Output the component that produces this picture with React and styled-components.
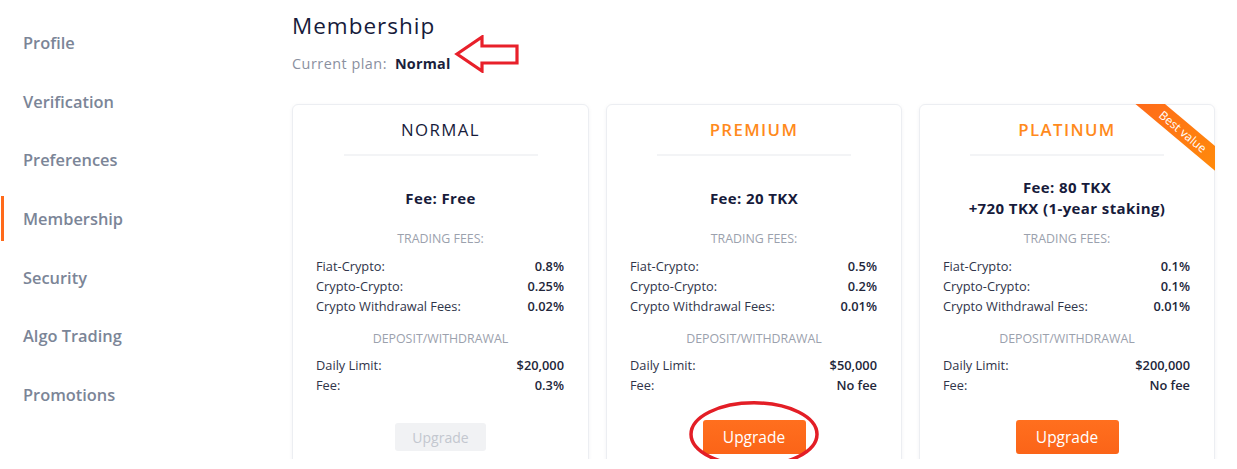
import React from 'react'
import styled, { createGlobalStyle } from 'styled-components'

const GlobalStyle = createGlobalStyle`
    html, body {
        margin: 0;
        padding: 0;
        background: #ffffff;
        font-family: "Open Sans", "Liberation Sans", sans-serif;
    }
    * {
        box-sizing: border-box;
    }
`;

const Page = styled.div`
    display: flex;
    width: 1237px;
    height: 459px;
    overflow: hidden;
    background: #ffffff;
`;

const Sidebar = styled.nav`
    width: 292px;
    flex-shrink: 0;
    padding-top: 13px;
    display: flex;
    flex-direction: column;
`;

const NavItem = styled.div`
    position: relative;
    height: 58.7px;
    display: flex;
    align-items: center;
    padding-left: 23px;
    font-size: 16.4px;
    font-weight: 600;
    color: #7b8597;

    ${props => props.active && `
        &::before {
            content: '';
            position: absolute;
            left: 1px;
            top: 7px;
            bottom: 7px;
            width: 3px;
            background: #ff6a1a;
        }
    `}
`;

const Main = styled.main`
    flex: 1;
    padding-top: 11px;
`;

const Title = styled.h1`
    margin: 0;
    font-size: 22.5px;
    line-height: 30px;
    font-weight: 500;
    letter-spacing: 1px;
    color: #171b3b;
`;

const CurrentPlan = styled.div`
    position: relative;
    display: flex;
    align-items: center;
    gap: 8px;
    margin-top: 12px;
    height: 20px;
    font-size: 14.4px;
    color: #8a90a0;
    letter-spacing: 0.5px;

    b {
        color: #1b1f3c;
        font-weight: 700;
        letter-spacing: 0.2px;
    }
`;

const ArrowMark = styled.svg`
    position: absolute;
    left: 162px;
    top: -18px;
`;

const Cards = styled.div`
    display: grid;
    grid-template-columns: 297px 296px 296px;
    column-gap: 17px;
    margin-top: 31px;
`;

const Card = styled.div`
    position: relative;
    height: 420px;
    border: 1px solid #eceef2;
    border-radius: 6px;
    box-shadow: 0 1px 4px rgba(30, 40, 70, 0.05);
    display: flex;
    flex-direction: column;
    align-items: center;
`;

const PlanName = styled.div`
    margin-top: 15px;
    height: 20px;
    line-height: 20px;
    font-size: 16.8px;
    font-weight: ${props => props.highlight ? 600 : 500};
    letter-spacing: 1.4px;
    color: ${props => props.highlight ? '#ff8a1c' : '#171b3b'};
`;

const Divider = styled.div`
    margin-top: 14px;
    width: 194px;
    height: 2px;
    background: #f3f4f6;
`;

const Fee = styled.div`
    margin-top: 14px;
    height: 56px;
    display: flex;
    flex-direction: column;
    justify-content: center;
    align-items: center;
    font-size: 15px;
    font-weight: 700;
    line-height: 21px;
    letter-spacing: 0.4px;
    color: #171b3b;
`;

const SectionLabel = styled.div`
    margin-top: ${props => props.gap}px;
    height: 16px;
    line-height: 16px;
    font-size: 12.4px;
    color: #9ba1ad;
    text-transform: uppercase;
`;

const Rows = styled.div`
    align-self: stretch;
    margin-top: ${props => props.gap}px;
    padding: 0 24px 0 23px;
`;

const Row = styled.div`
    display: flex;
    justify-content: space-between;
    align-items: center;
    height: 20px;
    font-size: 12.8px;
    color: #30354a;

    span:last-child {
        font-weight: 600;
        color: #22263a;
    }
`;

const ButtonWrap = styled.div`
    position: relative;
    margin-top: 25px;
    height: 34px;
    display: flex;
    align-items: center;
    justify-content: center;
`;

const UpgradeButton = styled.button`
    font-family: inherit;
    border: none;
    border-radius: 3px;
    cursor: ${props => props.disabled ? 'default' : 'pointer'};
    width: ${props => props.disabled ? 91 : 103}px;
    height: ${props => props.disabled ? 28 : 34}px;
    font-size: ${props => props.disabled ? 14 : 15.5}px;
    color: ${props => props.disabled ? '#c3c7cf' : '#ffffff'};
    background: ${props => props.disabled ? '#f1f2f4' : 'linear-gradient(180deg, #ff6f1e, #fb6418)'};
`;

const CircleMark = styled.svg`
    position: absolute;
    left: 50%;
    top: 50%;
    transform: translate(-50%, -54%);
    pointer-events: none;
`;

const Ribbon = styled.div`
    position: absolute;
    top: -1px;
    right: -1px;
    width: 80px;
    height: 70px;
    overflow: hidden;
    border-top-right-radius: 6px;
`;

const RibbonBand = styled.div`
    position: absolute;
    left: -8px;
    top: 18px;
    width: 112px;
    height: 19px;
    line-height: 19px;
    transform: rotate(40deg);
    background: linear-gradient(90deg, #ff6a1a, #ff8c0a);
    color: #ffffff;
    font-size: 12px;
    text-align: center;
`;

const plans = [
    {
        name: 'NORMAL',
        fee: ['Fee: Free'],
        trading: [['Fiat-Crypto:', '0.8%'], ['Crypto-Crypto:', '0.25%'], ['Crypto Withdrawal Fees:', '0.02%']],
        deposit: [['Daily Limit:', '$20,000'], ['Fee:', '0.3%']],
        disabled: true,
    },
    {
        name: 'PREMIUM',
        highlight: true,
        fee: ['Fee: 20 TKX'],
        trading: [['Fiat-Crypto:', '0.5%'], ['Crypto-Crypto:', '0.2%'], ['Crypto Withdrawal Fees:', '0.01%']],
        deposit: [['Daily Limit:', '$50,000'], ['Fee:', 'No fee']],
        circled: true,
    },
    {
        name: 'PLATINUM',
        highlight: true,
        fee: ['Fee: 80 TKX', '+720 TKX (1-year staking)'],
        trading: [['Fiat-Crypto:', '0.1%'], ['Crypto-Crypto:', '0.1%'], ['Crypto Withdrawal Fees:', '0.01%']],
        deposit: [['Daily Limit:', '$200,000'], ['Fee:', 'No fee']],
        badge: 'Best value',
    },
];

const navItems = ['Profile', 'Verification', 'Preferences', 'Membership', 'Security', 'Algo Trading', 'Promotions'];

const App = () => {
    return (
        <>
            <GlobalStyle />
            <Page>
                <Sidebar>
                    {navItems.map(item => (
                        <NavItem key={item} active={item === 'Membership'}>{item}</NavItem>
                    ))}
                </Sidebar>
                <Main>
                    <Title>Membership</Title>
                    <CurrentPlan>
                        Current plan: <b>Normal</b>
                        <ArrowMark width="66" height="38" viewBox="0 0 66 38">
                            <path d="M3 19 L28 2 L28 11 L63 11 L63 28 L28 28 L28 36 Z"
                                fill="none" stroke="#e8202a" strokeWidth="3.2" strokeLinejoin="miter" />
                        </ArrowMark>
                    </CurrentPlan>
                    <Cards>
                        {plans.map(plan => (
                            <Card key={plan.name}>
                                {plan.badge && <Ribbon><RibbonBand>{plan.badge}</RibbonBand></Ribbon>}
                                <PlanName highlight={plan.highlight}>{plan.name}</PlanName>
                                <Divider />
                                <Fee>
                                    {plan.fee.map(line => <div key={line}>{line}</div>)}
                                </Fee>
                                <SectionLabel gap={5}>Trading fees:</SectionLabel>
                                <Rows gap={9}>
                                    {plan.trading.map(([label, value]) => (
                                        <Row key={label}><span>{label}</span><span>{value}</span></Row>
                                    ))}
                                </Rows>
                                <SectionLabel gap={15}>Deposit/Withdrawal</SectionLabel>
                                <Rows gap={8}>
                                    {plan.deposit.map(([label, value]) => (
                                        <Row key={label}><span>{label}</span><span>{value}</span></Row>
                                    ))}
                                </Rows>
                                <ButtonWrap>
                                    <UpgradeButton disabled={plan.disabled}>Upgrade</UpgradeButton>
                                    {plan.circled && (
                                        <CircleMark width="132" height="68" viewBox="0 0 132 68">
                                            <ellipse cx="66" cy="34" rx="63" ry="31.5" fill="none" stroke="#e31e26" strokeWidth="3.5" />
                                        </CircleMark>
                                    )}
                                </ButtonWrap>
                            </Card>
                        ))}
                    </Cards>
                </Main>
            </Page>
        </>
    );
}

export default App;
